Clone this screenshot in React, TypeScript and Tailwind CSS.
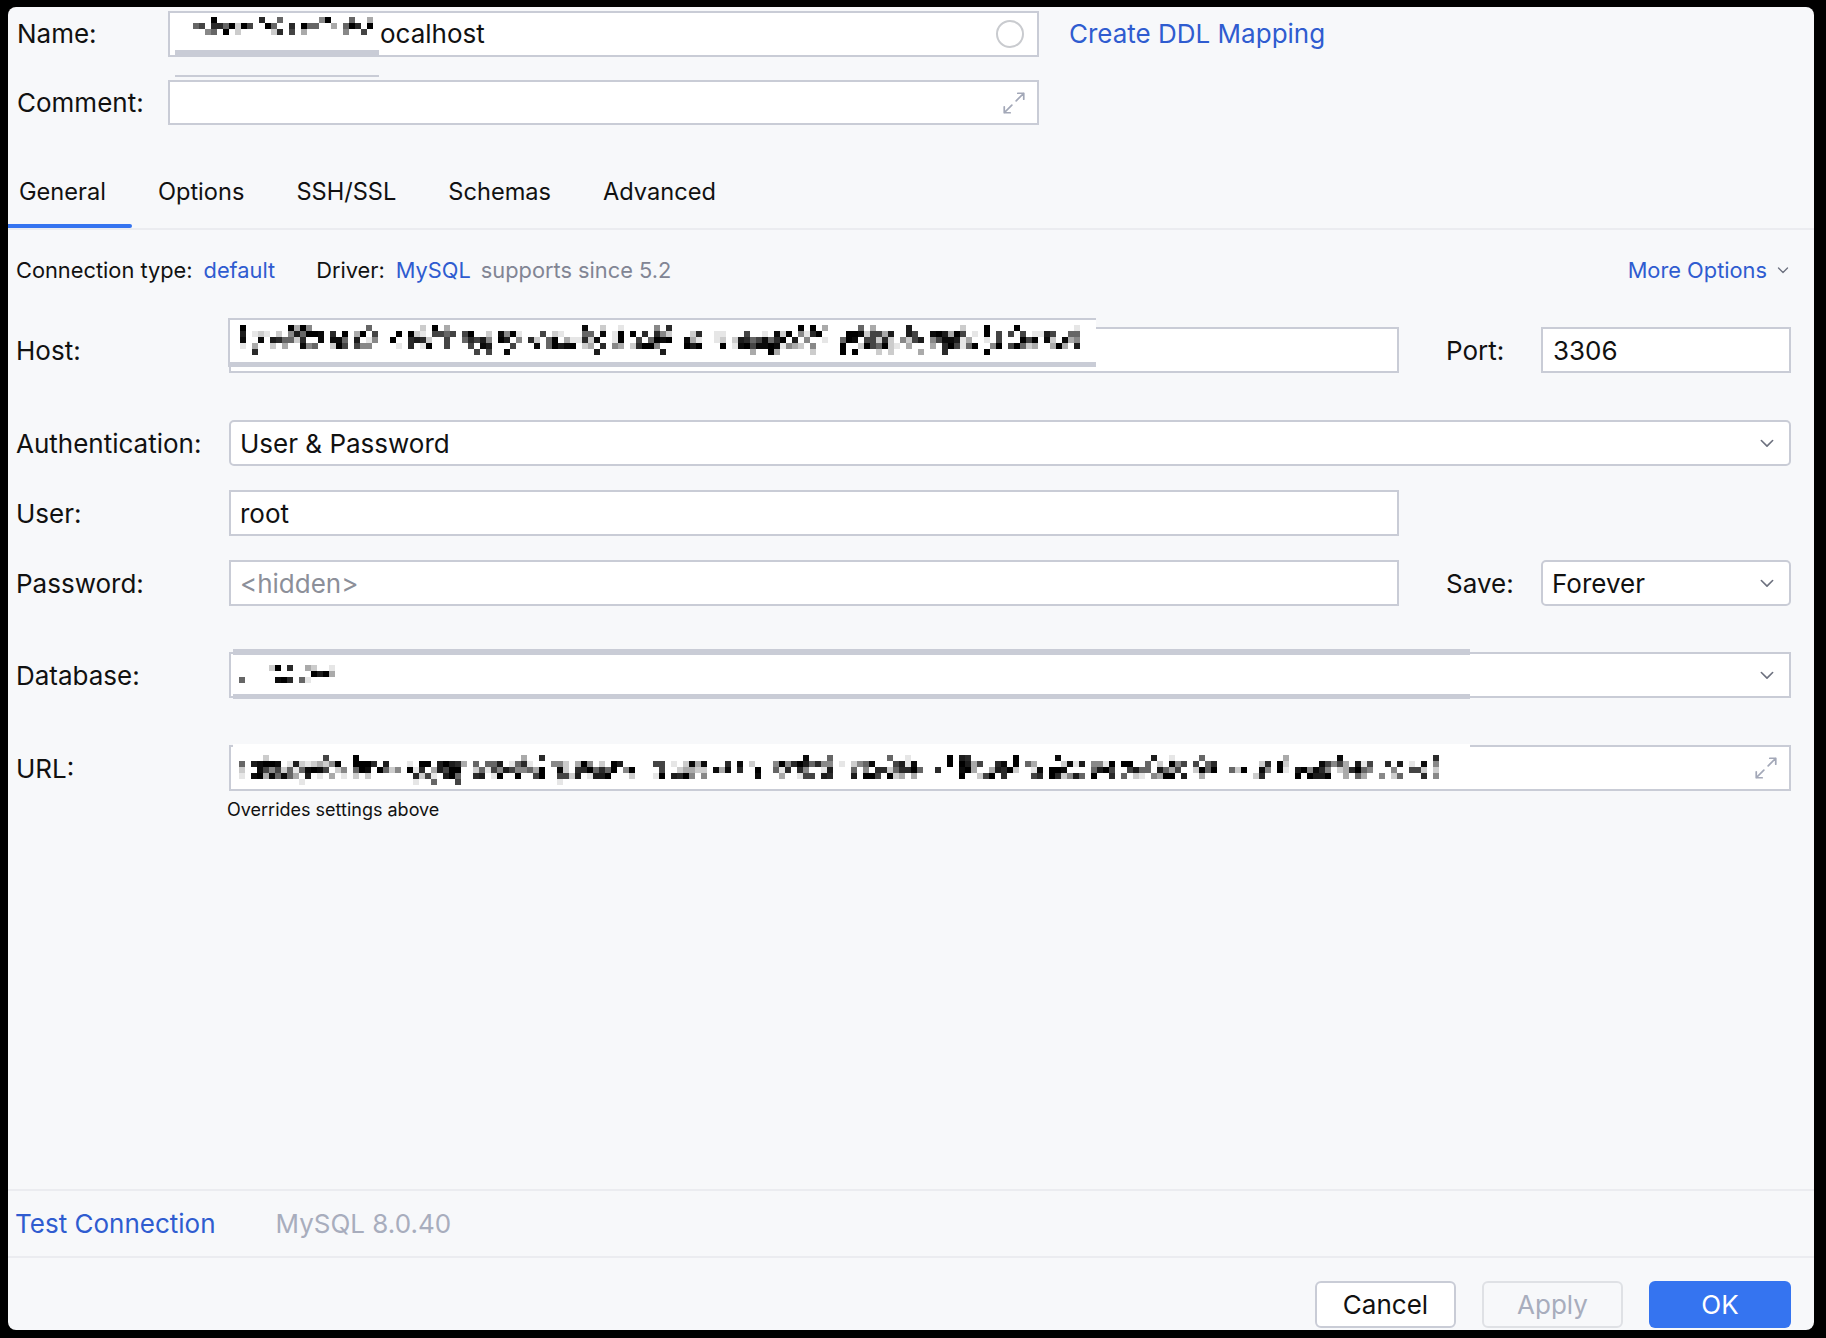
import React from "react";

// deterministic noise for the redacted (pixelated) parts of the form
function rng(seed: number) {
  let a = seed;
  return () => {
    a = (a + 0x6d2b79f5) | 0;
    let t = Math.imul(a ^ (a >>> 15), 1 | a);
    t = (t + Math.imul(t ^ (t >>> 7), 61 | t)) ^ t;
    return ((t ^ (t >>> 14)) >>> 0) / 4294967296;
  };
}

const inks = [
  "#000000",
  "#000000",
  "#0b0b0b",
  "#1c1c1c",
  "#2a2a2a",
  "#444444",
  "#666666",
  "#888888",
  "#aaaaaa",
  "#cccccc",
  "#e6e6e6",
];

function Mosaic({ cols, weights, seed }: { cols: number; weights: number[]; seed: number }) {
  const r = rng(seed);
  const grid: string[][] = weights.map(() => []);
  for (let x = 0; x < cols; x++) {
    const blank = x > 0 && r() < 0.12;
    weights.forEach((w, y) => {
      const ink = !blank && r() < w;
      grid[y].push(ink ? inks[Math.floor(r() * inks.length)] : "transparent");
    });
  }
  return (
    <div className="flex flex-col">
      {grid.map((row, y) => (
        <div key={y} className="flex">
          {row.map((c, x) => (
            <span key={x} className="block h-[6px] w-[6px] shrink-0" style={{ backgroundColor: c }} />
          ))}
        </div>
      ))}
    </div>
  );
}

function Chevron({ className }: { className?: string }) {
  return (
    <svg viewBox="0 0 16 16" className={className} fill="none" stroke="currentColor" strokeWidth="1.3" strokeLinecap="round" strokeLinejoin="round">
      <path d="M3.5 6 8 10.5 12.5 6" />
    </svg>
  );
}

function Expand() {
  return (
    <svg viewBox="0 0 24 24" className="h-[26px] w-[26px]" fill="none" stroke="#a3a8b8" strokeWidth="1.6" strokeLinecap="round" strokeLinejoin="round">
      <path d="M14 10 21 3M15.5 3H21V8.5M10 14 3 21M3 15.5V21H8.5" />
    </svg>
  );
}

export default function App() {
  return (
    <div className="h-[1338px] w-[1826px] overflow-hidden bg-black pl-[8px] pt-[7px]">
      <div className="flex h-[1323px] w-[1806px] flex-col overflow-hidden rounded-[8px] bg-[#f7f8fa] font-['Inter','Noto_Sans',sans-serif] text-[#111111]">
        {/* name + comment */}
        <div className="pl-[9px] pt-[4px]">
          <div className="flex items-center">
            <div className="w-[151px] text-[26px] leading-[32px]">Name:</div>
            <div className="relative flex h-[46px] w-[871px] items-center border-2 border-[#c9ccd6] bg-white pr-[13px]">
              <div className="absolute left-[5px] top-0 z-10 flex w-[204px] flex-col">
                <div className="h-[37px] bg-white pl-[18px] pt-[4px]">
                  <Mosaic cols={30} weights={[0.3, 0.6, 0.5]} seed={11} />
                </div>
                <div className="h-[6px] bg-[#c9ccd6]" />
                <div className="h-[19px]" />
                <div className="h-[2px] bg-[#c9ccd6]" />
              </div>
              <span className="ml-[210px] text-[26px] leading-[32px]">ocalhost</span>
              <div className="flex-1" />
              <div className="h-[28px] w-[28px] rounded-full border-2 border-[#c9cbcf]" />
            </div>
            <span className="ml-[30px] text-[26px] leading-[32px] text-[#2f5cd0]">Create DDL Mapping</span>
          </div>
          <div className="mt-[23px] flex items-center">
            <div className="w-[151px] text-[26px]">Comment:</div>
            <div className="flex h-[45px] w-[871px] items-center justify-end border-2 border-[#c9ccd6] bg-white pr-[10px]">
              <Expand />
            </div>
          </div>
        </div>

        {/* tabs */}
        <div className="mt-[30px] flex border-b-2 border-[#ebecf0] text-[23.6px]">
          <div className="relative flex h-[73px] items-center pl-[11px] pr-[26px]">
            General
            <div className="absolute bottom-0 left-0 right-0 h-[4px] rounded-r-[2px] bg-[#3574f0]" />
          </div>
          <div className="flex h-[73px] items-center px-[26px]">Options</div>
          <div className="flex h-[73px] items-center px-[26px]">SSH/SSL</div>
          <div className="flex h-[73px] items-center px-[26px]">Schemas</div>
          <div className="flex h-[73px] items-center px-[26px]">Advanced</div>
        </div>

        {/* connection type */}
        <div className="mt-[25px] flex h-[30px] items-center pl-[8px] pr-[23px] text-[21.8px]">
          <span>Connection type:</span>
          <span className="ml-[11px] text-[#2f5cd0]">default</span>
          <span className="ml-[41px]">Driver:</span>
          <span className="ml-[11px] text-[#2f5cd0]">MySQL</span>
          <span className="ml-[10px] text-[#818594]">supports since 5.2</span>
          <div className="flex-1" />
          <span className="text-[#2f5cd0]">More Options</span>
          <Chevron className="ml-[8px] h-[16px] w-[16px] text-[#6c707e]" />
        </div>

        {/* form */}
        <div className="pl-[8px] text-[26px]">
          <div className="mt-[42px] flex items-center">
            <div className="w-[213px]">Host:</div>
            <div className="relative flex h-[46px] w-[1170px] items-center border-2 border-[#c9ccd6] bg-white">
              <div className="absolute left-[-3px] top-[-11px] h-[49px] w-[868px] border-b-[5px] border-l-2 border-t-2 border-[#c9ccd6] bg-white pl-[10px] pt-[5px]">
                <Mosaic cols={140} weights={[0.18, 0.7, 0.75, 0.7, 0.15]} seed={23} />
              </div>
            </div>
            <div className="ml-[47px] w-[95px]">Port:</div>
            <div className="flex h-[46px] w-[250px] items-center border-2 border-[#c9ccd6] bg-white pl-[10px]">3306</div>
          </div>

          <div className="mt-[47px] flex items-center">
            <div className="w-[213px]">Authentication:</div>
            <div className="flex h-[46px] w-[1562px] items-center justify-between rounded-[5px] border-2 border-[#c9ccd6] bg-white pl-[9px] pr-[12px]">
              <span>User &amp; Password</span>
              <Chevron className="h-[20px] w-[20px] text-[#6c707e]" />
            </div>
          </div>

          <div className="mt-[24px] flex items-center">
            <div className="w-[213px]">User:</div>
            <div className="flex h-[46px] w-[1170px] items-center border-2 border-[#c9ccd6] bg-white pl-[9px]">root</div>
          </div>

          <div className="mt-[24px] flex items-center">
            <div className="w-[213px]">Password:</div>
            <div className="flex h-[46px] w-[1170px] items-center border-2 border-[#c9ccd6] bg-white pl-[9px] text-[#8c8f99]">
              &lt;hidden&gt;
            </div>
            <div className="ml-[47px] w-[95px]">Save:</div>
            <div className="flex h-[46px] w-[250px] items-center justify-between rounded-[5px] border-2 border-[#c9ccd6] bg-white pl-[9px] pr-[12px]">
              <span>Forever</span>
              <Chevron className="h-[20px] w-[20px] text-[#6c707e]" />
            </div>
          </div>

          <div className="mt-[46px] flex items-center">
            <div className="w-[213px]">Database:</div>
            <div className="relative flex h-[46px] w-[1562px] items-center justify-end border-2 border-[#c9ccd6] bg-white pr-[12px]">
              <div className="absolute left-[2px] top-[-5px] h-[50px] w-[1237px] border-b-[5px] border-t-[6px] border-[#c9ccd6] bg-white pl-[6px] pt-[10px]">
                <Mosaic cols={18} weights={[0.4, 0.25, 0.5]} seed={5} />
              </div>
              <Chevron className="h-[20px] w-[20px] text-[#6c707e]" />
            </div>
          </div>

          <div className="mt-[47px] flex items-center">
            <div className="w-[213px]">URL:</div>
            <div className="relative flex h-[46px] w-[1562px] items-center justify-end border-2 border-[#c9ccd6] bg-white pr-[10px]">
              <div className="absolute left-[2px] top-[-3px] h-[44px] w-[1237px] bg-white pl-[6px] pt-[11px]">
                <Mosaic cols={200} weights={[0.12, 0.7, 0.75, 0.65, 0.08]} seed={41} />
              </div>
              <Expand />
            </div>
          </div>

          <div className="ml-[211px] mt-[5px] text-[18px]">Overrides settings above</div>
        </div>

        <div className="flex-1" />

        {/* footer */}
        <div className="border-t-2 border-[#ebecf0]">
          <div className="flex h-[65px] items-center pl-[7px] text-[26px]">
            <span className="text-[#2f5cd0]">Test Connection</span>
            <span className="ml-[60px] text-[#a8adbd]">MySQL 8.0.40</span>
          </div>
        </div>
        <div className="border-t-2 border-[#ebecf0] pb-[2px]">
          <div className="mt-[23px] flex justify-end gap-[26px] pr-[23px] text-[26px]">
            <button className="h-[47px] w-[141px] rounded-[6px] border-2 border-[#c9ccd6] bg-white text-[#111111]">Cancel</button>
            <button className="h-[47px] w-[141px] rounded-[6px] border-2 border-[#dfe1e5] text-[#a8adbd]">Apply</button>
            <button className="h-[47px] w-[142px] rounded-[6px] bg-[#3574f0] text-white">OK</button>
          </div>
        </div>
      </div>
    </div>
  );
}
